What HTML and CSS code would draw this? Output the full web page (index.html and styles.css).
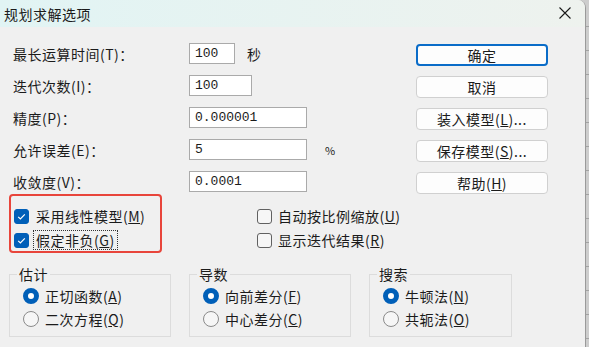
FILE: index.html
```html
<!DOCTYPE html>
<html lang="zh-CN">
<head>
    <meta charset="UTF-8">
    <meta name="viewport" content="width=device-width, initial-scale=1.0">
    <title>规划求解选项</title>
    <link rel="stylesheet" href="styles.css">
</head>
<body>
    <div class="window">
        <div class="titlebar">
            <span class="title">规划求解选项</span>
            <span class="close" aria-label="关闭">
                <svg width="12" height="12" viewBox="0 0 12 12"><path d="M0.5 0.5 L11.5 11.5 M11.5 0.5 L0.5 11.5" stroke="#1a1a1a" stroke-width="1.1" fill="none"/></svg>
            </span>
        </div>

        <div class="content">
            <div class="top">
                <div class="form">
                    <div class="row">
                        <span class="label">最长运算时间(T)：</span>
                        <input class="field short" type="text" value="100">
                        <span class="unit">秒</span>
                    </div>
                    <div class="row">
                        <span class="label">迭代次数(I)：</span>
                        <input class="field mid" type="text" value="100">
                    </div>
                    <div class="row">
                        <span class="label">精度(P)：</span>
                        <input class="field" type="text" value="0.000001">
                    </div>
                    <div class="row">
                        <span class="label">允许误差(E)：</span>
                        <input class="field" type="text" value="5">
                        <span class="pct">%</span>
                    </div>
                    <div class="row">
                        <span class="label">收敛度(V)：</span>
                        <input class="field" type="text" value="0.0001">
                    </div>
                </div>

                <div class="buttons">
                    <button class="btn default">确定</button>
                    <button class="btn">取消</button>
                    <button class="btn">装入模型(<u>L</u>)...</button>
                    <button class="btn">保存模型(<u>S</u>)...</button>
                    <button class="btn">帮助(<u>H</u>)</button>
                </div>
            </div>

            <div class="checks">
                <div class="highlight"></div>
                <div class="check">
                    <span class="box on"><svg width="13" height="13" viewBox="0 0 13 13"><path d="M3.2 6.8 L5.4 9 L9.8 4.4" stroke="#fff" stroke-width="1.2" fill="none"/></svg></span>
                    <span>采用线性模型(<u>M</u>)</span>
                </div>
                <div class="check right">
                    <span class="box"></span>
                    <span>自动按比例缩放(<u>U</u>)</span>
                </div>
                <div class="check tight">
                    <span class="box on"><svg width="13" height="13" viewBox="0 0 13 13"><path d="M3.2 6.8 L5.4 9 L9.8 4.4" stroke="#fff" stroke-width="1.2" fill="none"/></svg></span>
                    <span class="focus">假定非负(<u>G</u>)</span>
                </div>
                <div class="check right">
                    <span class="box"></span>
                    <span>显示迭代结果(<u>R</u>)</span>
                </div>
            </div>

            <div class="groups">
                <fieldset class="group est">
                    <legend>估计</legend>
                    <div class="radio"><span class="dot on"></span><span>正切函数(<u>A</u>)</span></div>
                    <div class="radio"><span class="dot"></span><span>二次方程(<u>Q</u>)</span></div>
                </fieldset>
                <fieldset class="group der">
                    <legend>导数</legend>
                    <div class="radio"><span class="dot on"></span><span>向前差分(<u>F</u>)</span></div>
                    <div class="radio"><span class="dot"></span><span>中心差分(<u>C</u>)</span></div>
                </fieldset>
                <fieldset class="group search">
                    <legend>搜索</legend>
                    <div class="radio"><span class="dot on"></span><span>牛顿法(<u>N</u>)</span></div>
                    <div class="radio"><span class="dot"></span><span>共轭法(<u>O</u>)</span></div>
                </fieldset>
            </div>
        </div>
    </div>
</body>
</html>
```

FILE: styles.css
```css
* {
    box-sizing: border-box;
}

html {
    background: repeating-linear-gradient(to bottom, #cdcdcd 0, #cdcdcd 23px, #a3a3a3 23px, #a3a3a3 24px);
    background-position: 0 3px;
}

body {
    margin: 0;
    font-family: "Noto Sans CJK SC", "Noto Sans", sans-serif;
    font-size: 14px;
    line-height: 20px;
    letter-spacing: 0.5px;
    color: #1b1b1b;
}

.window {
    width: 586px;
    height: 347px;
    background-color: #f0f0f0;
    border-right: 1px solid #9a9a9a;
    border-top-right-radius: 8px;
    overflow: hidden;
}

.titlebar {
    height: 27px;
    display: flex;
    align-items: center;
    justify-content: space-between;
    padding: 0 14px 0 4px;
    background: linear-gradient(90deg, #e1f4f4, #eef2ee);
}

.close {
    display: flex;
    margin-bottom: 1px;
}

.content {
    padding: 16px 37px 0 9px;
}

.top {
    display: flex;
    justify-content: space-between;
}

.form {
    display: flex;
    flex-direction: column;
    gap: 11px;
    padding-left: 4px;
}

.row {
    display: flex;
    align-items: center;
    height: 21px;
}

.label {
    width: 176px;
}

.field {
    width: 118px;
    height: 21px;
    margin: 0;
    padding: 0 5px;
    border: 1px solid #aaaaaa;
    background-color: #fff;
    font-family: "Liberation Mono", monospace;
    font-size: 13px;
    letter-spacing: 0;
    color: #1b1b1b;
    outline: none;
}

.field.short {
    width: 46px;
}

.field.mid {
    width: 63px;
}

.unit {
    margin-left: 12px;
}

.pct {
    margin-left: 18px;
    font-size: 11px;
}

.buttons {
    display: flex;
    flex-direction: column;
    gap: 10px;
    margin-top: 1px;
    width: 132px;
}

.btn {
    height: 22px;
    padding: 0;
    border: 1px solid #d0d0d0;
    border-radius: 4px;
    background-color: #fdfdfd;
    font-family: inherit;
    font-size: 14px;
    letter-spacing: 0.5px;
    color: #1b1b1b;
    line-height: 18px;
}

.btn.default {
    border: 2px solid #0a6cc8;
}

.checks {
    position: relative;
    margin-top: 10px;
    padding-left: 5px;
    display: grid;
    grid-template-columns: 243px auto;
    grid-auto-rows: 24px;
}

.highlight {
    position: absolute;
    left: 0;
    top: -10px;
    width: 153px;
    height: 59px;
    border: 2.5px solid #e8453b;
    border-radius: 4px;
}

.check {
    display: flex;
    align-items: center;
    gap: 7px;
}

.check.right {
    gap: 6px;
}

.check.tight {
    gap: 4px;
}

.box {
    width: 15px;
    height: 15px;
    border: 1px solid #616161;
    border-radius: 3px;
    background-color: #f6f6f6;
    display: flex;
    align-items: center;
    justify-content: center;
}

.box.on {
    background-color: #005fb8;
    border-color: #005fb8;
}

.focus {
    padding: 0 2px;
    line-height: 18px;
    border: 1px dotted #333;
}

.groups {
    display: flex;
    gap: 18px;
    margin-top: 12px;
}

.group {
    margin: 0;
    min-width: 0;
    border: 1px solid #dcdcdc;
    padding: 0 0 6px 13px;
}

.group.est,
.group.der {
    width: 162px;
}

.group.search {
    width: 143px;
}

.group legend {
    padding: 0 2px;
    margin-left: -6px;
    line-height: 20px;
}

.radio {
    display: flex;
    align-items: center;
    gap: 6px;
    height: 23px;
}

.dot {
    width: 16px;
    height: 16px;
    border-radius: 50%;
    border: 1px solid #8a8a8a;
    background-color: #f6f6f6;
}

.dot.on {
    border: 5px solid #005fb8;
    background-color: #fff;
}
```
